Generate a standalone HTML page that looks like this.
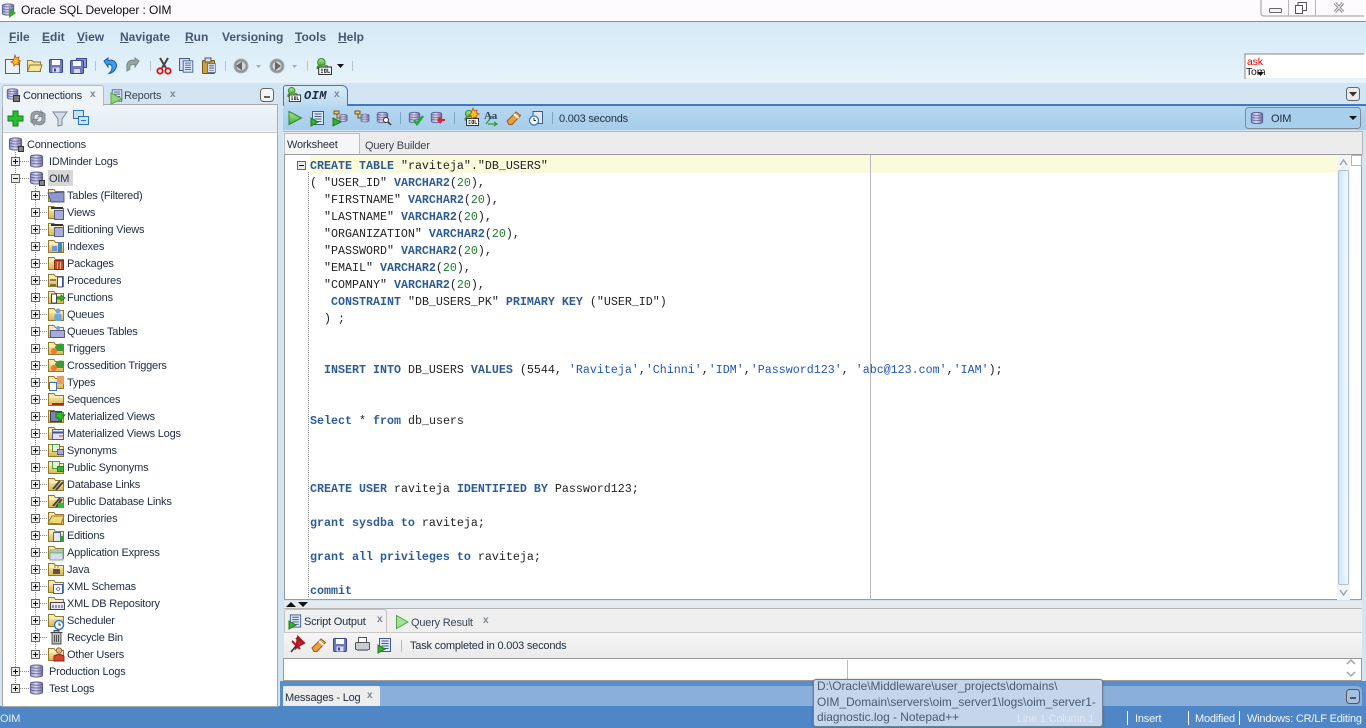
<!DOCTYPE html>
<html lang="en"><head><meta charset="utf-8"><title>Oracle SQL Developer : OIM</title>
<style>
html,body{margin:0;padding:0;width:1366px;height:728px;overflow:hidden;background:#4f86c6}
body{position:relative;font-family:"Liberation Sans",sans-serif;font-size:11px;letter-spacing:-.2px;color:#1f2c40}
.a{position:absolute}
.t{position:absolute;white-space:pre;line-height:14px;margin-top:1px}
.m{position:absolute;top:30px;white-space:pre;font-weight:bold;font-size:12px;letter-spacing:0;line-height:14px;color:#46566e}
svg{position:absolute;left:0;top:0;overflow:hidden}
#code{position:absolute;left:310px;top:158px;margin:0;font-family:"Liberation Mono",monospace;font-size:11.67px;letter-spacing:0;line-height:17px;color:#222;height:442px;overflow:hidden;width:1020px}
.k{color:#2d5c94;font-weight:bold}.s{color:#1f55b8}.n{color:#1d7a2a}
.x{position:absolute;font-weight:bold;font-size:10px;line-height:12px;color:#7b8794;margin-top:1px}
</style></head><body>
<div class="a" style="left:0;top:0;width:1366px;height:21px;background:#fdfbfd"></div>
<div class="a" style="left:0;top:21px;width:1366px;height:1px;background:#8d8d8d"></div>
<div class="a" style="left:0;top:22px;width:1366px;height:61px;background:linear-gradient(#d5e9f6,#e6f3fb)"></div>
<div class="a" style="left:0;top:83px;width:1366px;height:623px;background:#d3e5f2"></div>
<div class="a" style="left:0;top:706px;width:1366px;height:22px;background:#4f86c6"></div>

<!-- left panel -->
<div class="a" style="left:2px;top:104px;width:274px;height:601px;background:#f3f6f8;border:1px solid #a9a9a9"></div>
<div class="a" style="left:3px;top:105px;width:274px;height:26px;background:linear-gradient(#eff5f9,#e4edf3)"></div>
<div class="a" style="left:3px;top:132px;width:274px;height:573px;background:#fff;border-top:1px solid #c8c8c8"></div>
<div class="a" style="left:2px;top:85px;width:100px;height:20px;background:#eef3f6;border:1px solid #b4bcc4;border-bottom:0;border-radius:3px 3px 0 0"></div>
<div class="a" style="left:48px;top:170px;width:25px;height:16px;background:#d6d6d6"></div>

<!-- right panel -->
<div class="a" style="left:283px;top:104px;width:1083px;height:2px;background:#3c78c8"></div>
<div class="a" style="left:283px;top:106px;width:1083px;height:24px;background:linear-gradient(#b6d8f1,#a6cdea)"></div>
<div class="a" style="left:283px;top:85px;width:63px;height:20px;background:linear-gradient(#d9ecf9,#b9daf2);border:1px solid #3c78c8;border-bottom:0;border-radius:3px 6px 0 0"></div>
<div class="a" style="left:283px;top:131px;width:1079px;height:23px;background:#ececec;border-top:1px solid #b4b4b4;border-right:1px solid #b4b4b4"></div>
<div class="a" style="left:284px;top:133px;width:76px;height:21px;background:#f6f6f6;border:1px solid #bcbcbc;border-bottom:0;box-sizing:border-box"></div>
<div class="a" style="left:284px;top:154px;width:1078px;height:446px;background:#fff;border:1px solid #9b9b9b;box-sizing:border-box"></div>
<div class="a" style="left:310px;top:155px;width:1027px;height:18px;background:#fafadd"></div>
<div class="a" style="left:870px;top:155px;width:1px;height:445px;background:#b9b9b9"></div>
<div class="a" style="left:1337px;top:155px;width:13px;height:445px;background:#f2f5f7"></div>
<div class="a" style="left:1338px;top:170px;width:11px;height:415px;background:linear-gradient(90deg,#cfe4f5,#f4fafe);border:1px solid #a9c2d8;box-sizing:border-box;border-radius:2px"></div>
<div class="a" style="left:1351px;top:155px;width:11px;height:11px;background:#fff;border:1px solid #b4b4b4;box-sizing:border-box"></div>

<!-- bottom panel -->
<div class="a" style="left:284px;top:601px;width:1078px;height:7px;background:#e4eaee"></div>
<div class="a" style="left:284px;top:608px;width:1078px;height:23px;background:#efefef;border-top:1px solid #b4b4b4"></div>
<div class="a" style="left:284px;top:609px;width:103px;height:23px;background:#f0f0f0;border:1px solid #c2c2c2;border-bottom:0;border-radius:3px 3px 0 0;box-sizing:border-box"></div>
<div class="a" style="left:284px;top:632px;width:1078px;height:26px;background:linear-gradient(#f6f6f6,#eaeaea);border-top:1px solid #c8c8c8;box-sizing:border-box"></div>
<div class="a" style="left:283px;top:658px;width:1079px;height:23px;background:#fff;border:1px solid #9b9b9b;box-sizing:border-box"></div>
<div class="a" style="left:847px;top:660px;width:1px;height:20px;background:#bdbdbd"></div>
<div class="a" style="left:280px;top:681px;width:1086px;height:25px;background:#5a8ecb"></div>
<div class="a" style="left:283px;top:686px;width:1079px;height:20px;background:#8aafda;border-radius:0 5px 0 0"></div>
<div class="a" style="left:283px;top:686px;width:97px;height:20px;background:#ededed;border-radius:2px 2px 0 0"></div>

<svg width="1366" height="728" viewBox="0 0 1366 728">
<defs>
<linearGradient id="g" x1="0" x2="1" y1="0" y2="0"><stop offset="0" stop-color="#8f8fc2"/><stop offset=".45" stop-color="#dcdcf0"/><stop offset="1" stop-color="#6c6ca6"/></linearGradient>
<linearGradient id="fo" x1="0" x2="0" y1="0" y2="1"><stop offset="0" stop-color="#fdf3b8"/><stop offset="1" stop-color="#dcb650"/></linearGradient>
<linearGradient id="gr" x1="0" x2="0" y1="0" y2="1"><stop offset="0" stop-color="#b6ec9c"/><stop offset="1" stop-color="#3aa82c"/></linearGradient>
<symbol id="db" viewBox="0 0 16 16"><path d="M1.500 3.500C1.500 1 14.500 1 14.500 3.500V12.500C14.500 15 1.500 15 1.500 12.500Z" fill="url(#g)" stroke="#5c5c90"/><path d="M1.500 6.500C3 8.500 13 8.500 14.500 6.500M1.500 9.500C3 11.500 13 11.500 14.500 9.500M1.500 3.500C3 5.500 13 5.500 14.500 3.500" fill="none" stroke="#5c5c90" stroke-width=".8"/></symbol>
<symbol id="f" viewBox="0 0 16 16"><path d="M.5 14.500V2.500H6L7.500 4.500H15.500V14.500Z" fill="url(#fo)" stroke="#8f7a30"/><path d="M1.500 6H14.500" stroke="#fffbe0"/></symbol>
<symbol id="p" viewBox="0 0 9 9"><rect x=".5" y=".5" width="8" height="8" fill="#ececec" stroke="#666"/><path d="M2 4.500H7M4.500 2V7" stroke="#111"/></symbol>
<symbol id="mi" viewBox="0 0 9 9"><rect x=".5" y=".5" width="8" height="8" fill="#ececec" stroke="#666"/><path d="M2 4.500H7" stroke="#111"/></symbol>
<symbol id="sql" viewBox="0 0 16 16"><circle cx="6" cy="4" r="3.500" fill="url(#gr)" stroke="#3c8a2c"/><path d="M2 9C2 6 11 6 12 8V10H2Z" fill="url(#gr)" stroke="#3c8a2c"/><rect x="3.500" y="8.500" width="12" height="7" fill="#fff" stroke="#333"/><path d="M5.500 10.500H7.500M5.500 12H7.500M5.500 13.500H7.500M9 10.500H10.500V13.500H9ZM12 10V13.500H14" stroke="#223" fill="none" stroke-width=".8"/></symbol>
<symbol id="run" viewBox="0 0 16 16"><path d="M2 1.500L14.500 8L2 14.500Z" fill="url(#gr)" stroke="#2e8a24"/></symbol>
<symbol id="doc" viewBox="0 0 16 16"><rect x="2.500" y="1.500" width="11" height="13" fill="#dfe6f6" stroke="#3f5b8f"/><path d="M4.500 4H11.500M4.500 6.500H11.500M4.500 9H11.500M4.500 11.500H11.500" stroke="#3f5b8f"/></symbol>
<symbol id="dis" viewBox="0 0 16 16"><rect x="1.500" y="1.500" width="13" height="13" rx="1" fill="#6d79c0" stroke="#3c4690"/><rect x="4" y="2" width="8" height="5" fill="#fff"/><rect x="4.500" y="9.500" width="7" height="5" fill="#d8dcf0"/><rect x="6" y="10.500" width="2" height="3" fill="#3c4690"/></symbol>
<symbol id="er" viewBox="0 0 16 16"><path d="M1 11L10 2L14.500 5.500L6 14.500H3Z" fill="#ef9d3f" stroke="#9a5a1a"/><path d="M8 4L12.500 8" stroke="#fff" stroke-width="2"/></symbol>
<symbol id="nav" viewBox="0 0 16 16"><circle cx="8" cy="8" r="7" fill="#8d949a" stroke="#a8aeb2"/><circle cx="8" cy="8" r="4.500" fill="#d4d8da"/></symbol>
<symbol id="h" viewBox="0 0 16 16"><rect x="5" y="1.500" width="9.500" height="12" fill="#dfe6f6" stroke="#3f5b8f"/><circle cx="6" cy="10.500" r="4.500" fill="#fff" stroke="#2e78c0" stroke-width="1.300"/><path d="M6 8V10.500H8" stroke="#333" fill="none"/></symbol>
</defs>

<!-- title icon -->
<use href="#db" x="1" y="2" width="14" height="15"/><path d="M9 8L16 13L9 18Z" fill="#3aa82c"/>
<!-- window controls -->
<path d="M1261 0V13Q1261 16 1264 16H1364" fill="none" stroke="#9a9a9a"/><path d="M1288.500 0V16M1315.500 0V16" stroke="#b5b5b5"/>
<rect x="1269.500" y="8.500" width="12" height="4" rx="1" fill="#f4f4f4" stroke="#666"/>
<rect x="1295.500" y="5.500" width="7" height="8" fill="#fff" stroke="#555"/><path d="M1298 5V2.500H1306.500V10.500H1303" fill="none" stroke="#555"/>
<path d="M1335 3L1343 12M1343 3L1335 12" stroke="#888" stroke-width="3"/><path d="M1335 3L1343 12M1343 3L1335 12" stroke="#f0f0f0"/>

<!-- main toolbar -->
<path d="M5.500 59.500H16L19.500 63V73.500H5.500Z" fill="#eef2fb" stroke="#4c5c84"/><path d="M15 55L16.200 58L19 57L18 60L20.500 61L18 62.500L19 65L16 64L14 66L13.500 63L11 62L13.500 60.500Z" fill="#f5c518" stroke="#c84820" stroke-width=".8"/>
<path d="M27.500 71.500V60.500H32L33.500 62H40.500V71.500Z" fill="url(#fo)" stroke="#8f7a30"/><path d="M27.500 71.500L30 65H42L40 71.500Z" fill="#f5e6a0" stroke="#8f7a30"/>
<use href="#dis" x="48" y="58" width="16" height="16"/>
<rect x="76.500" y="58.500" width="10" height="9" fill="#8c96cf" stroke="#3c4690"/><rect x="70.500" y="60.500" width="13" height="13" rx="1" fill="#6d79c0" stroke="#3c4690"/><rect x="73" y="61" width="8" height="5" fill="#fff"/><rect x="74" y="69" width="6" height="4" fill="#d8dcf0"/>
<path d="M95.500 61V71M150.500 61V71M225.500 61V71M307.500 61V71M352.500 61V71" stroke="#b4c4d0"/>
<path d="M104 61L108 58V60.500C114 59 118 63 116 68C115 71 112 73 109 73.500C112 71 113 67 111 65C110 64 109 64 108 64.500V67Z" fill="#3e9de6" stroke="#1f5aa8"/>
<path d="M139 61L135 58V60.500C130 59 126 62 127 68V71L130 69C129 66 131 64 135 64.500V67Z" fill="#9aa3a3" stroke="#7d8686"/>
<path d="M160 58L166 68M168 58L162 68" stroke="#444" stroke-width="2"/><circle cx="160" cy="71" r="2.700" fill="none" stroke="#d11" stroke-width="1.800"/><circle cx="168" cy="71" r="2.700" fill="none" stroke="#d11" stroke-width="1.800"/>
<rect x="179.500" y="58.500" width="10" height="12" fill="#d6deee" stroke="#49597c"/><use href="#doc" x="181" y="59" width="14" height="15"/>
<rect x="202.500" y="60.500" width="12" height="13" rx="1" fill="#d0a040" stroke="#6e561c"/><rect x="205" y="58" width="6" height="4" fill="#ddd" stroke="#555"/><use href="#doc" x="206" y="62" width="11" height="12"/>
<use href="#nav" x="233" y="58" width="16" height="16"/><path d="M236 66L242 61.500V70.500Z" fill="#666"/><path d="M256 65H261L258.500 68Z" fill="#aaa"/>
<use href="#nav" x="269" y="58" width="16" height="16"/><path d="M281 66L275 61.500V70.500Z" fill="#666"/><path d="M292 65H297L294.500 68Z" fill="#aaa"/>
<use href="#sql" x="315" y="58" width="17" height="17"/><path d="M337 64H344L340.500 68Z" fill="#111"/>

<!-- left tabs -->
<use href="#db" x="6" y="87" width="13" height="14"/><rect x="13.500" y="95.500" width="6" height="6" fill="#777" stroke="#333"/>
<use href="#doc" x="110" y="88" width="14" height="15"/><path d="M111 93L122 99L111 104Z" fill="#8fd67f" stroke="#5aa84c"/>
<rect x="260.500" y="88.500" width="13" height="13" rx="3" fill="#f6f6f6" stroke="#666"/><path d="M264 97H270" stroke="#333" stroke-width="1.500"/>
<path d="M1346.500 90.500Q1346.500 87.500 1349.500 87.500H1356.500Q1359.500 87.500 1359.500 90.500V97.500Q1359.500 100.500 1356.500 100.500H1349.500Q1346.500 100.500 1346.500 97.500Z" fill="#ebebeb" stroke="#666"/><path d="M1349 92H1357L1353 96.500Z" fill="#333"/>

<!-- left toolbar -->
<path d="M13 111H18V116H23V121H18V126H13V121H8V116H13Z" fill="#27c12d" stroke="#167a1c"/>
<path d="M31 116C31 111 38 110 41 113V111L44 116L38 117L40 115C37 113 34 114 34 117V124L31 122Z" fill="#9ba3aa" stroke="#7d858c"/><path d="M45 120C45 125 38 126 35 123L34 125L32 120L38 119L36 121C39 123 42 122 42 119V112L45 114Z" fill="#9ba3aa" stroke="#7d858c"/>
<path d="M53 112H67L62 119V125L58 126V119Z" fill="#d2dbe6" stroke="#7b8794"/>
<rect x="73.500" y="110.500" width="10" height="8" fill="#cfe2f4" stroke="#2a74c0"/><rect x="78.500" y="116.500" width="10" height="8" fill="#cfe2f4" stroke="#2a74c0"/><path d="M81 120.500H86" stroke="#2a74c0"/>

<!-- tree lines -->
<g stroke="#888" stroke-dasharray="1 1" fill="none">
<path d="M15.500 152V688M35.500 186V654M308.500 172V598"/>
<path d="M20 161.500H29M20 178.500H29M20 671.500H29M20 688.500H29"/>
<path d="M40 195.500H47M40 212.500H47M40 229.500H47M40 246.500H47M40 263.500H47M40 280.500H47M40 297.500H47M40 314.500H47M40 331.500H47M40 348.500H47M40 365.500H47M40 382.500H47M40 399.500H47M40 416.500H47M40 433.500H47M40 450.500H47M40 467.500H47M40 484.500H47M40 501.500H47M40 518.500H47M40 535.500H47M40 552.500H47M40 569.500H47M40 586.500H47M40 603.500H47M40 620.500H47M40 637.500H47M40 654.500H47"/>
</g>
<!-- expanders -->
<use href="#p" x="11" y="157" width="9" height="9"/><use href="#mi" x="11" y="174" width="9" height="9"/><use href="#p" x="11" y="667" width="9" height="9"/><use href="#p" x="11" y="684" width="9" height="9"/>
<use href="#p" x="31" y="191" width="9" height="9"/><use href="#p" x="31" y="208" width="9" height="9"/><use href="#p" x="31" y="225" width="9" height="9"/><use href="#p" x="31" y="242" width="9" height="9"/><use href="#p" x="31" y="259" width="9" height="9"/><use href="#p" x="31" y="276" width="9" height="9"/><use href="#p" x="31" y="293" width="9" height="9"/><use href="#p" x="31" y="310" width="9" height="9"/><use href="#p" x="31" y="327" width="9" height="9"/><use href="#p" x="31" y="344" width="9" height="9"/><use href="#p" x="31" y="361" width="9" height="9"/><use href="#p" x="31" y="378" width="9" height="9"/><use href="#p" x="31" y="395" width="9" height="9"/><use href="#p" x="31" y="412" width="9" height="9"/><use href="#p" x="31" y="429" width="9" height="9"/><use href="#p" x="31" y="446" width="9" height="9"/><use href="#p" x="31" y="463" width="9" height="9"/><use href="#p" x="31" y="480" width="9" height="9"/><use href="#p" x="31" y="497" width="9" height="9"/><use href="#p" x="31" y="514" width="9" height="9"/><use href="#p" x="31" y="531" width="9" height="9"/><use href="#p" x="31" y="548" width="9" height="9"/><use href="#p" x="31" y="565" width="9" height="9"/><use href="#p" x="31" y="582" width="9" height="9"/><use href="#p" x="31" y="599" width="9" height="9"/><use href="#p" x="31" y="616" width="9" height="9"/><use href="#p" x="31" y="633" width="9" height="9"/><use href="#p" x="31" y="650" width="9" height="9"/>
<!-- db icons -->
<use href="#db" x="8" y="136" width="15" height="16"/><rect x="18.500" y="146.500" width="5" height="5" fill="#888" stroke="#333"/>
<use href="#db" x="29" y="153" width="15" height="16"/>
<use href="#db" x="29" y="170" width="15" height="16"/><rect x="39.500" y="180.500" width="5" height="5" fill="#888" stroke="#333"/>
<use href="#db" x="29" y="663" width="15" height="16"/>
<use href="#db" x="29" y="680" width="15" height="16"/>
<!-- folders -->
<use href="#f" x="48" y="187" width="16" height="16"/><use href="#f" x="48" y="204" width="16" height="16"/><use href="#f" x="48" y="221" width="16" height="16"/><use href="#f" x="48" y="238" width="16" height="16"/><use href="#f" x="48" y="255" width="16" height="16"/><use href="#f" x="48" y="272" width="16" height="16"/><use href="#f" x="48" y="289" width="16" height="16"/><use href="#f" x="48" y="306" width="16" height="16"/><use href="#f" x="48" y="323" width="16" height="16"/><use href="#f" x="48" y="340" width="16" height="16"/><use href="#f" x="48" y="357" width="16" height="16"/><use href="#f" x="48" y="374" width="16" height="16"/><use href="#f" x="48" y="391" width="16" height="16"/><use href="#f" x="48" y="408" width="16" height="16"/><use href="#f" x="48" y="425" width="16" height="16"/><use href="#f" x="48" y="442" width="16" height="16"/><use href="#f" x="48" y="459" width="16" height="16"/><use href="#f" x="48" y="476" width="16" height="16"/><use href="#f" x="48" y="493" width="16" height="16"/><use href="#f" x="48" y="510" width="16" height="16"/><use href="#f" x="48" y="527" width="16" height="16"/><use href="#f" x="48" y="544" width="16" height="16"/><use href="#f" x="48" y="561" width="16" height="16"/><use href="#f" x="48" y="578" width="16" height="16"/><use href="#f" x="48" y="595" width="16" height="16"/><use href="#f" x="48" y="612" width="16" height="16"/><use href="#f" x="48" y="646" width="16" height="16"/>
<!-- folder overlays -->
<g stroke-width=".9">
<path d="M48 193L64 192V202H51Z" fill="#8f96cc" stroke="#4a528c"/>
<rect x="54.500" y="210.500" width="9" height="9" fill="#a7acd8" stroke="#4a528c"/><path d="M51 208H63" stroke="#333" stroke-width="2"/>
<rect x="54.500" y="227.500" width="9" height="9" fill="#a7acd8" stroke="#4a528c"/><path d="M51 225H63" stroke="#333" stroke-width="2"/>
<rect x="52" y="246" width="5" height="5" fill="#7a93c8"/><path d="M60 242V252" stroke="#3e86d0" stroke-width="4"/>
<rect x="54.500" y="260.500" width="9" height="9" fill="#c94a2c" stroke="#7c2410"/><path d="M57.500 262V269M60.500 262V269" stroke="#f0c0a0"/>
<rect x="57.500" y="277" width="5" height="10" fill="#fff" stroke="#2a3a90"/><path d="M50 280H56M50 285H56" stroke="#222"/>
<rect x="51.500" y="294" width="5" height="9" fill="#fff" stroke="#333"/><path d="M57 297H61V295L65 298L61 301V299H57Z" fill="#3ac22c" stroke="#1f7a18"/>
<circle cx="58" cy="311" r="2.500" fill="#6ca6e4"/><rect x="54.500" y="314" width="7" height="7" rx="2" fill="#6ca6e4"/>
<rect x="50.500" y="330.500" width="14" height="7" fill="#a7acd8" stroke="#4a528c"/><circle cx="58" cy="328" r="2" fill="#6ca6e4"/>
<path d="M55 347C56 344 62 342 64 345V351H56Z" fill="#3e9c38"/><circle cx="54" cy="351" r="3" fill="#ef7a30"/>
<path d="M55 364C56 361 62 359 64 362V368H56Z" fill="#3e9c38"/><circle cx="54" cy="368" r="3" fill="#ef7a30"/>
<rect x="49.500" y="382.500" width="7" height="8" fill="#fff" stroke="#2a68c8"/><rect x="57" y="376" width="7" height="8" fill="#e8a060"/>
<rect x="52" y="403" width="12" height="2" fill="#a03020"/>
<rect x="50.500" y="411.500" width="11" height="10" fill="#7a84b8" stroke="#333"/><path d="M56 413L62 412V415H65L59 422V418L56 418Z" fill="#2bc12d" stroke="#167a1c"/>
<rect x="52.500" y="429.500" width="11" height="10" fill="#dfe3f4" stroke="#4a528c"/><path d="M53 432.500H63" stroke="#4a528c" stroke-width="2"/><path d="M59 436H63" stroke="#d22"/>
<rect x="52.500" y="444.500" width="7" height="7" fill="#e8f4e0" stroke="#3a9a34"/><rect x="57.500" y="449.500" width="6" height="5" fill="#a7acd8" stroke="#4a528c"/>
<rect x="52.500" y="461.500" width="7" height="7" fill="#e8f4e0" stroke="#3a9a34"/><rect x="57.500" y="466.500" width="6" height="5" fill="#37b52c" stroke="#1f7a18"/>
<path d="M53 489L60 481M56 490L63 482" stroke="#444" stroke-width="2"/>
<path d="M53 506L60 498M56 507L62 499" stroke="#444" stroke-width="2"/><rect x="58" y="503" width="5" height="5" fill="#2bc12d"/>
<path d="M48 523L52 516H64L61 524Z" fill="#f2d878" stroke="#8f7a30"/>
<rect x="53.500" y="532.500" width="7" height="9" fill="#e4e8f8" stroke="#3f5b8f"/><path d="M60 537C62 535 64 536 64 538V541H60Z" fill="#3a9a34"/>
<rect x="50" y="550" width="13" height="10" fill="#d8dcf2" stroke="#7ea070"/><path d="M50 552.500H63" stroke="#7fc07a" stroke-width="2"/>
<rect x="53" y="569" width="7" height="5" fill="#555"/><path d="M55 565V568M58 565V568" stroke="#a66"/>
<rect x="53.500" y="584.500" width="9" height="9" fill="#fff" stroke="#3050a0"/><path d="M56 589L58 587M56 589L58 591M60 589L58.500 587M60 589L58.500 591" stroke="#3050a0" stroke-width=".7"/>
<rect x="50.500" y="602.500" width="14" height="7" fill="#e4e8f8" stroke="#333"/><path d="M53 605V608M56 605V608M59 605V608M62 605V608" stroke="#333"/>
<circle cx="59" cy="625" r="4.500" fill="#fff" stroke="#2a7ac8" stroke-width="1.500"/><path d="M59 622.500V625H61" stroke="#333" fill="none"/>
<path d="M50.500 632.500H62.500M52 633V644H61V633M54.500 635V642M56.500 635V642M58.500 635V642M54 632V630.500H59V632" fill="#bdbdbd" stroke="#444"/>
<circle cx="59" cy="650.500" r="2.700" fill="#e8b890" stroke="#8a5a30"/><path d="M54 661V656Q59 653 64 656V661Z" fill="#d84030" stroke="#8a1e14"/>
</g>

<!-- editor tab + toolbar -->
<use href="#sql" x="286" y="87" width="15" height="15"/>
<use href="#run" x="287" y="110" width="16" height="16"/>
<use href="#doc" x="310" y="110" width="16" height="16"/><path d="M311 118L318 122L311 126Z" fill="#36b02c" stroke="#1f7a18"/>
<g><path d="M333 118L341 122L333 126Z" fill="#36b02c" stroke="#1f7a18"/><use href="#db" x="339" y="111" width="9" height="14"/><path d="M334 111H339V114H334ZM337 114V118H340" fill="#f5c860" stroke="#74551c"/></g>
<g><use href="#db" x="360" y="111" width="10" height="14"/><path d="M355 111H360V114H355ZM358 114V118H361" fill="#f5c860" stroke="#74551c"/></g>
<g><use href="#db" x="376" y="110" width="13" height="15"/><circle cx="386" cy="120" r="2.500" fill="#fff" stroke="#333"/><path d="M388 122L391 125" stroke="#333" stroke-width="1.500"/></g>
<path d="M400.500 112V124M454.500 112V124M552.500 112V124" stroke="#7fa5c4"/>
<g><use href="#db" x="408" y="110" width="13" height="15"/><path d="M414 120L417 124L423 116" fill="none" stroke="#1fae2c" stroke-width="2.500"/></g>
<g><use href="#db" x="430" y="110" width="13" height="15"/><path d="M438 120H445M438 120L441 117M438 120L441 123" fill="none" stroke="#d8233a" stroke-width="2"/></g>
<g><use href="#sql" x="463" y="110" width="16" height="16"/><path d="M473 108L474.500 111L477 110L476.500 113L479 114L476.500 115.500L477 118L474 117L472 119L471.500 116L469 115L471 113.500Z" fill="#f5c518" stroke="#c84820" stroke-width=".8"/></g>
<path d="M486 124L492 116M488 124H497M494 122L497 124L494 126" fill="none" stroke="#2aa02c" stroke-width="1.300"/>
<use href="#er" x="506" y="110" width="16" height="16"/>
<use href="#h" x="528" y="110" width="16" height="16"/>

<!-- OIM combo -->
<rect x="1245.500" y="107.500" width="115" height="21" rx="3" fill="#a8cfec" stroke="#808a94"/>
<use href="#db" x="1250" y="110" width="14" height="16"/>
<path d="M1349 116H1357L1353 120Z" fill="#111"/>
<!-- asktom -->
<rect x="1245" y="54" width="121" height="24" fill="#fff"/><path d="M1245 79V54H1364" fill="none" stroke="#8a8a8a"/>
<path d="M1257 72H1264L1260.500 76Z" fill="#111"/>
<!-- fold -->
<use href="#mi" x="297" y="161" width="9" height="9"/>
<!-- scrollbar arrows -->
<path d="M1340 165L1343.500 160L1347 165" fill="none" stroke="#9aa6ae" stroke-width="1.500"/><path d="M1340 590L1343.500 595L1347 590" fill="none" stroke="#9aa6ae" stroke-width="1.500"/>
<path d="M1339 664L1343 660L1347 664M1339 672L1343 676L1347 672" transform="translate(8,0)" fill="none" stroke="#9aa6ae" stroke-width="1.500"/>
<!-- splitter arrows -->
<path d="M286 607L291 602L296 607Z" fill="#111"/><path d="M298 602H308L303 607Z" fill="#111"/>
<!-- bottom tabs -->
<use href="#doc" x="288" y="612" width="15" height="18"/><path d="M289 621L296 625L289 629Z" fill="#36b02c" stroke="#1f7a18"/>
<path d="M396.500 615.500L408 622L396.500 628.500Z" fill="#a7df96" stroke="#4ca544"/>
<!-- bottom toolbar -->
<path d="M296 638L301 642M292 641L300 649M298 637L304 643L300 645L296 648Z" fill="#d8232a" stroke="#a81820" stroke-width="2"/><path d="M291 652L296 646" stroke="#333" stroke-width="1.500"/>
<use href="#er" x="311" y="637" width="16" height="16"/>
<use href="#dis" x="332" y="637" width="16" height="16"/>
<g><rect x="358.500" y="637.500" width="8" height="5" fill="#fff" stroke="#555"/><rect x="355.500" y="642.500" width="14" height="7" rx="1" fill="#c8ccd0" stroke="#555"/><rect x="357" y="649" width="11" height="2" fill="#8a8e92"/></g>
<use href="#doc" x="377" y="637" width="16" height="16"/><path d="M378 645L385 649L378 653Z" fill="#36b02c" stroke="#1f7a18"/>
<path d="M401.500 640V652" stroke="#b8b8b8"/>
<!-- messages minimize -->
<rect x="1346.500" y="689.500" width="13" height="14" rx="3" fill="#a5c1e2" stroke="#555"/><path d="M1350 698H1356" stroke="#333" stroke-width="1.500"/>
<path d="M1127.500 711V725M1188.500 711V725M1239.500 711V725" stroke="#fff"/>
</svg>

<!-- title & menu -->
<div class="t" style="left:21px;top:2px;font-size:12px;letter-spacing:-.1px;color:#111">Oracle SQL Developer : OIM</div>
<div class="m" style="left:9px"><u>F</u>ile</div>
<div class="m" style="left:42px"><u>E</u>dit</div>
<div class="m" style="left:77px"><u>V</u>iew</div>
<div class="m" style="left:120px"><u>N</u>avigate</div>
<div class="m" style="left:185px"><u>R</u>un</div>
<div class="m" style="left:222px">Versi<u>o</u>ning</div>
<div class="m" style="left:295px"><u>T</u>ools</div>
<div class="m" style="left:338px"><u>H</u>elp</div>
<div class="t" style="left:1247px;top:55px;font-size:10.500px;color:#e00000;line-height:12px">ask</div>
<div class="t" style="left:1246px;top:65px;font-size:10.500px;color:#111;line-height:12px">Tom</div>

<!-- tabs -->
<div class="t" style="left:23px;top:88px">Connections</div><div class="x" style="left:90px;top:88px">x</div>
<div class="t" style="left:124px;top:88px;color:#3a4656">Reports</div><div class="x" style="left:170px;top:88px">x</div>
<div class="t" style="left:304px;top:88px;font-style:italic;font-weight:bold;font-size:12px;font-family:'Liberation Mono',monospace;color:#1b2a44;letter-spacing:.4px">OIM</div><div class="x" style="left:334px;top:88px">x</div>
<div class="t" style="left:559px;top:111px">0.003 seconds</div>
<div class="t" style="left:1271px;top:111px">OIM</div>
<div class="t" style="left:287px;top:137px">Worksheet</div>
<div class="t" style="left:365px;top:138px;color:#3a4656">Query Builder</div>
<div class="t" style="left:484px;top:108px;font-size:11px;font-weight:bold;color:#33415c;font-family:'Liberation Serif',serif">Aa</div>

<!-- tree -->
<div class="t" style="left:27px;top:137px">Connections</div>
<div class="t" style="left:49px;top:154px">IDMinder Logs</div>
<div class="t" style="left:49px;top:171px">OIM</div>
<div class="t" style="left:67px;top:188px">Tables (Filtered)</div>
<div class="t" style="left:67px;top:205px">Views</div>
<div class="t" style="left:67px;top:222px">Editioning Views</div>
<div class="t" style="left:67px;top:239px">Indexes</div>
<div class="t" style="left:67px;top:256px">Packages</div>
<div class="t" style="left:67px;top:273px">Procedures</div>
<div class="t" style="left:67px;top:290px">Functions</div>
<div class="t" style="left:67px;top:307px">Queues</div>
<div class="t" style="left:67px;top:324px">Queues Tables</div>
<div class="t" style="left:67px;top:341px">Triggers</div>
<div class="t" style="left:67px;top:358px">Crossedition Triggers</div>
<div class="t" style="left:67px;top:375px">Types</div>
<div class="t" style="left:67px;top:392px">Sequences</div>
<div class="t" style="left:67px;top:409px">Materialized Views</div>
<div class="t" style="left:67px;top:426px">Materialized Views Logs</div>
<div class="t" style="left:67px;top:443px">Synonyms</div>
<div class="t" style="left:67px;top:460px">Public Synonyms</div>
<div class="t" style="left:67px;top:477px">Database Links</div>
<div class="t" style="left:67px;top:494px">Public Database Links</div>
<div class="t" style="left:67px;top:511px">Directories</div>
<div class="t" style="left:67px;top:528px">Editions</div>
<div class="t" style="left:67px;top:545px">Application Express</div>
<div class="t" style="left:67px;top:562px">Java</div>
<div class="t" style="left:67px;top:579px">XML Schemas</div>
<div class="t" style="left:67px;top:596px">XML DB Repository</div>
<div class="t" style="left:67px;top:613px">Scheduler</div>
<div class="t" style="left:67px;top:630px">Recycle Bin</div>
<div class="t" style="left:67px;top:647px">Other Users</div>
<div class="t" style="left:49px;top:664px">Production Logs</div>
<div class="t" style="left:49px;top:681px">Test Logs</div>

<pre id="code"><span class="k">CREATE TABLE</span> "raviteja"."DB_USERS"
( "USER_ID" <span class="k">VARCHAR2</span>(<span class="n">20</span>),
  "FIRSTNAME" <span class="k">VARCHAR2</span>(<span class="n">20</span>),
  "LASTNAME" <span class="k">VARCHAR2</span>(<span class="n">20</span>),
  "ORGANIZATION" <span class="k">VARCHAR2</span>(<span class="n">20</span>),
  "PASSWORD" <span class="k">VARCHAR2</span>(<span class="n">20</span>),
  "EMAIL" <span class="k">VARCHAR2</span>(<span class="n">20</span>),
  "COMPANY" <span class="k">VARCHAR2</span>(<span class="n">20</span>),
   <span class="k">CONSTRAINT</span> "DB_USERS_PK" <span class="k">PRIMARY KEY</span> ("USER_ID")
  ) ;


  <span class="k">INSERT INTO</span> DB_USERS <span class="k">VALUES</span> (5544, <span class="s">'Raviteja'</span>,<span class="s">'Chinni'</span>,<span class="s">'IDM'</span>,<span class="s">'Password123'</span>, <span class="s">'abc@123.com'</span>,<span class="s">'IAM'</span>);


<span class="k">Select</span> * <span class="k">from</span> db_users



<span class="k">CREATE USER</span> raviteja <span class="k">IDENTIFIED BY</span> Password123;

<span class="k">grant sysdba to</span> raviteja;

<span class="k">grant all privileges to</span> raviteja;

<span class="k">commit</span></pre>

<!-- bottom -->
<div class="t" style="left:304px;top:614px">Script Output</div><div class="x" style="left:377px;top:613px">x</div>
<div class="t" style="left:411px;top:615px;color:#3a4656">Query Result</div><div class="x" style="left:483px;top:614px">x</div>
<div class="t" style="left:410px;top:638px">Task completed in 0.003 seconds</div>
<div class="t" style="left:285px;top:690px">Messages - Log</div><div class="x" style="left:367px;top:689px">x</div>

<!-- status -->
<div class="t" style="left:0;top:711px;color:#e8f0fa">OIM</div>
<div class="t" style="left:1135px;top:711px;color:#f2f6fc">Insert</div>
<div class="t" style="left:1195px;top:711px;color:#f2f6fc">Modified</div>
<div class="t" style="left:1247px;top:711px;color:#f2f6fc">Windows: CR/LF Editing</div>

<!-- tooltip -->
<div class="a" style="left:813px;top:679px;width:290px;height:48px;background:#c5d5ea;border:1px solid #6f7f92;border-radius:3px;box-sizing:border-box;box-shadow:0 0 2px rgba(0,0,0,.25)"></div>
<div class="t" style="left:817px;top:678px;font-size:11.900px;letter-spacing:0;line-height:15.500px;color:#4c5a6e">D:\Oracle\Middleware\user_projects\domains\
OIM_Domain\servers\oim_server1\logs\oim_server1-
diagnostic.log - Notepad++</div>
<div class="t" style="left:1017px;top:711px;color:#dfe8f4">Line 1 Column 1</div>
</body></html>
